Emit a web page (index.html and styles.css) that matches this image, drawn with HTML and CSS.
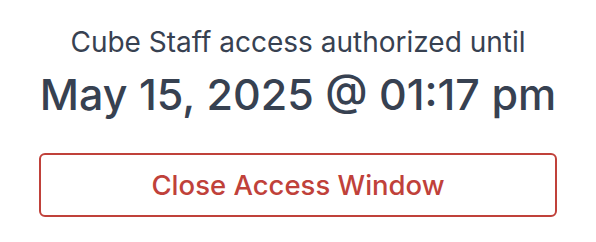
FILE: index.html
```html
<!DOCTYPE html>
<html>
<head>
<meta charset="utf-8">
<link rel="stylesheet" href="styles.css">
</head>
<body>
<div class="panel">
  <p class="label">Cube Staff access authorized until</p>
  <p class="date">May 15, 2025 @ 01:17 pm</p>
  <button class="close-btn">Close Access Window</button>
</div>
</body>
</html>
```
FILE: styles.css
```css
html, body {
  margin: 0;
  padding: 0;
  background: #ffffff;
}
body {
  font-family: Inter, "Noto Sans", sans-serif;
}
.panel {
  display: flex;
  flex-direction: column;
  align-items: center;
  padding: 25px 39px 0;
}
.label {
  margin: 0;
  font-size: 28px;
  line-height: 34px;
  color: #374151;
  white-space: nowrap;
}
.date {
  margin: 9px 0 0;
  font-size: 43px;
  line-height: 52px;
  font-weight: 500;
  color: #374151;
  white-space: nowrap;
}
.close-btn {
  margin-top: 33px;
  width: 100%;
  height: 64px;
  border: 2px solid #c0413a;
  border-radius: 6px;
  background: #ffffff;
  color: #c0413a;
  font-family: Inter, "Noto Sans", sans-serif;
  font-size: 27.5px;
  font-weight: 500;
}
```
